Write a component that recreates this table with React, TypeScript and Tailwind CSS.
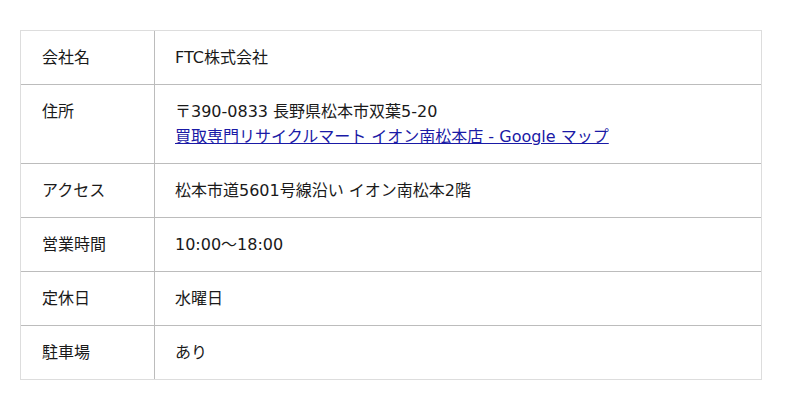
import React from "react";

const rows: { label: string; value: React.ReactNode }[] = [
  { label: "会社名", value: "FTC株式会社" },
  {
    label: "住所",
    value: (
      <>
        <div>〒390-0833 長野県松本市双葉5-20</div>
        <a href="#" className="text-[#1a1aa6] underline">
          買取専門リサイクルマート イオン南松本店 - Google マップ
        </a>
      </>
    ),
  },
  { label: "アクセス", value: "松本市道5601号線沿い イオン南松本2階" },
  { label: "営業時間", value: "10:00〜18:00" },
  { label: "定休日", value: "水曜日" },
  { label: "駐車場", value: "あり" },
];

export default function App() {
  return (
    <div
      className="min-h-[410px] w-[800px] bg-white pl-[20px] pt-[30px] text-[16px] leading-[25px] text-[#1a1a1a]"
      style={{ fontFamily: '"DejaVu Sans", "Noto Sans CJK JP", sans-serif' }}
    >
      <div className="w-[742px] border border-[#dddddd]">
        {rows.map((row, i) => (
          <div
            key={row.label}
            className={
              i === 0 ? "flex" : "flex border-t border-[#bcbcbc]"
            }
          >
            <div className="w-[134px] shrink-0 border-r border-[#bcbcbc] px-[21px] py-[14px]">
              {row.label}
            </div>
            <div className="flex-1 px-[20px] py-[14px]">{row.value}</div>
          </div>
        ))}
      </div>
    </div>
  );
}
